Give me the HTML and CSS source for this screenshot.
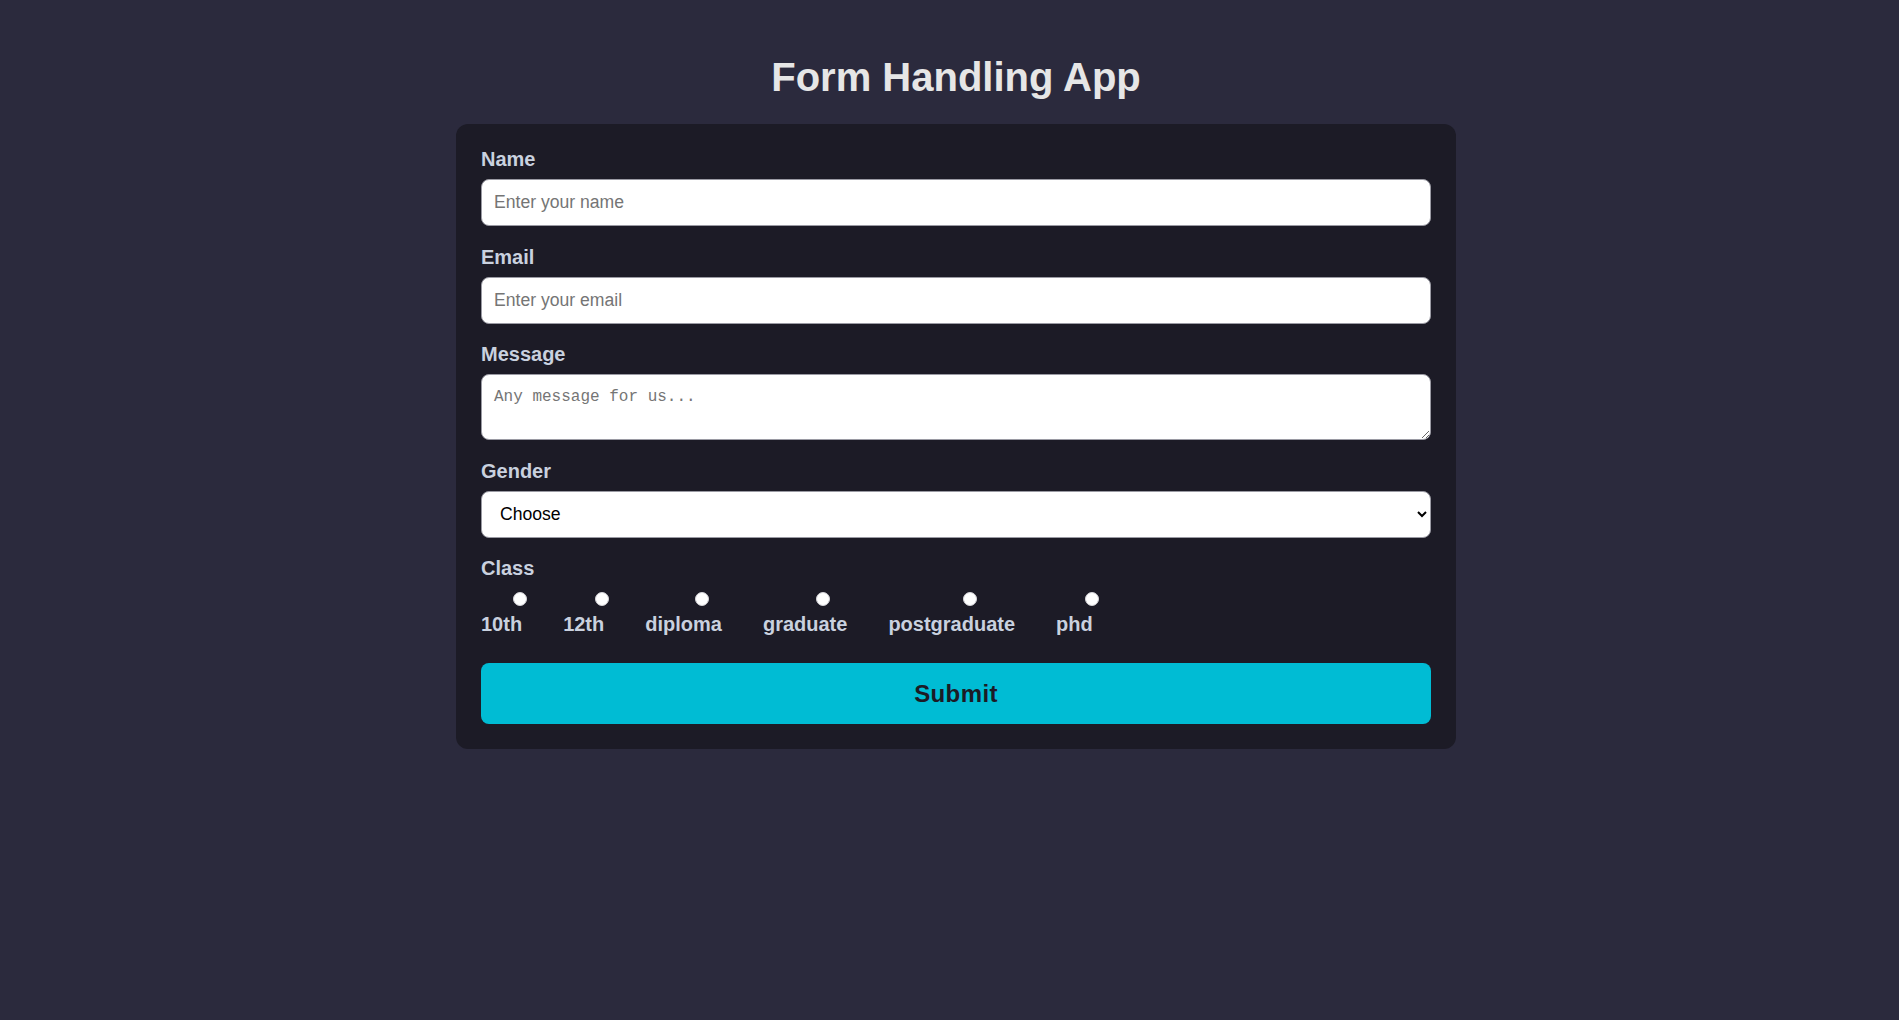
FILE: index.html
```html
<!DOCTYPE html>
<html lang="en">
<head>
<meta charset="utf-8">
<title>Form Handling App</title>
<link rel="stylesheet" href="styles.css">
</head>
<body>
<div class="page">
  <h1 class="title">Form Handling App</h1>
  <form class="card">
    <div class="field">
      <label class="label" for="name">Name</label>
      <input class="control" id="name" type="text" placeholder="Enter your name">
    </div>
    <div class="field">
      <label class="label" for="email">Email</label>
      <input class="control" id="email" type="email" placeholder="Enter your email">
    </div>
    <div class="field">
      <label class="label" for="msg">Message</label>
      <textarea class="control area" id="msg" placeholder="Any message for us..."></textarea>
    </div>
    <div class="field">
      <label class="label" for="gender">Gender</label>
      <select class="control select" id="gender">
        <option>Choose</option>
        <option>Male</option>
        <option>Female</option>
      </select>
    </div>
    <div class="field field-class">
      <div class="label">Class</div>
      <div class="radios">
        <label class="opt"><input class="radio" type="radio" name="cls"><span>10th</span></label>
        <label class="opt"><input class="radio" type="radio" name="cls"><span>12th</span></label>
        <label class="opt"><input class="radio" type="radio" name="cls"><span>diploma</span></label>
        <label class="opt"><input class="radio" type="radio" name="cls"><span>graduate</span></label>
        <label class="opt"><input class="radio" type="radio" name="cls"><span>postgraduate</span></label>
        <label class="opt"><input class="radio" type="radio" name="cls"><span>phd</span></label>
      </div>
    </div>
    <button class="submit" type="button">Submit</button>
  </form>
</div>
</body>
</html>
```

FILE: styles.css
```css
html, body {
  margin: 0;
  padding: 0;
  background: #2b2a3d;
  min-height: 100%;
}
body {
  font-family: "Liberation Sans", Arial, sans-serif;
  min-height: 1020px;
}
.page {
  display: flex;
  flex-direction: column;
  align-items: center;
  padding: 54px 0 0 13px;
}
.title {
  margin: 0 0 24px;
  font-size: 40px;
  line-height: 46px;
  font-weight: bold;
  color: #e6e6e6;
}
.card {
  box-sizing: border-box;
  width: 1000px;
  background: #1c1b26;
  border-radius: 12px;
  padding: 24px 25px 25px;
  display: flex;
  flex-direction: column;
}
.field {
  display: flex;
  flex-direction: column;
  margin-bottom: 19.5px;
}
.label {
  font-size: 20px;
  line-height: 23px;
  font-weight: bold;
  color: #c9d1df;
  margin-bottom: 8px;
}
.control {
  box-sizing: border-box;
  width: 100%;
  height: 47px;
  padding: 0 12px;
  font-family: "Liberation Sans", Arial, sans-serif;
  font-size: 17.6px;
  color: #000;
  background: #fff;
  border: 1px solid #9a9aa3;
  border-radius: 8px;
  outline: none;
}
.control::placeholder {
  color: #757575;
}
.area {
  height: 66px;
  padding: 13px 12px 9px;
  font-family: "Liberation Mono", "DejaVu Sans Mono", monospace;
  font-size: 16px;
  line-height: 18px;
}
.select {
  height: 47px;
  padding: 0 12px 0 14px;
}
.field-class {
  margin-bottom: 27px;
}
.field-class .label {
  margin-bottom: 0;
}
.radios {
  display: flex;
  gap: 41px;
}
.opt {
  display: flex;
  flex-direction: column;
  align-items: center;
  font-size: 20px;
  line-height: 23px;
  font-weight: bold;
  color: #c9d1df;
}
.radio {
  appearance: none;
  -webkit-appearance: none;
  box-sizing: border-box;
  width: 14px;
  height: 14px;
  margin: 12px -18px 7px 18px;
  border-radius: 50%;
  background: #fff;
  border: 1px solid #d4d4d8;
}
.submit {
  height: 61px;
  width: 100%;
  border: none;
  border-radius: 8px;
  background: #00bcd4;
  color: #1c1b26;
  font-family: "Liberation Sans", Arial, sans-serif;
  font-size: 24px;
  font-weight: 900;
  letter-spacing: 0.4px;
  cursor: pointer;
}
```
